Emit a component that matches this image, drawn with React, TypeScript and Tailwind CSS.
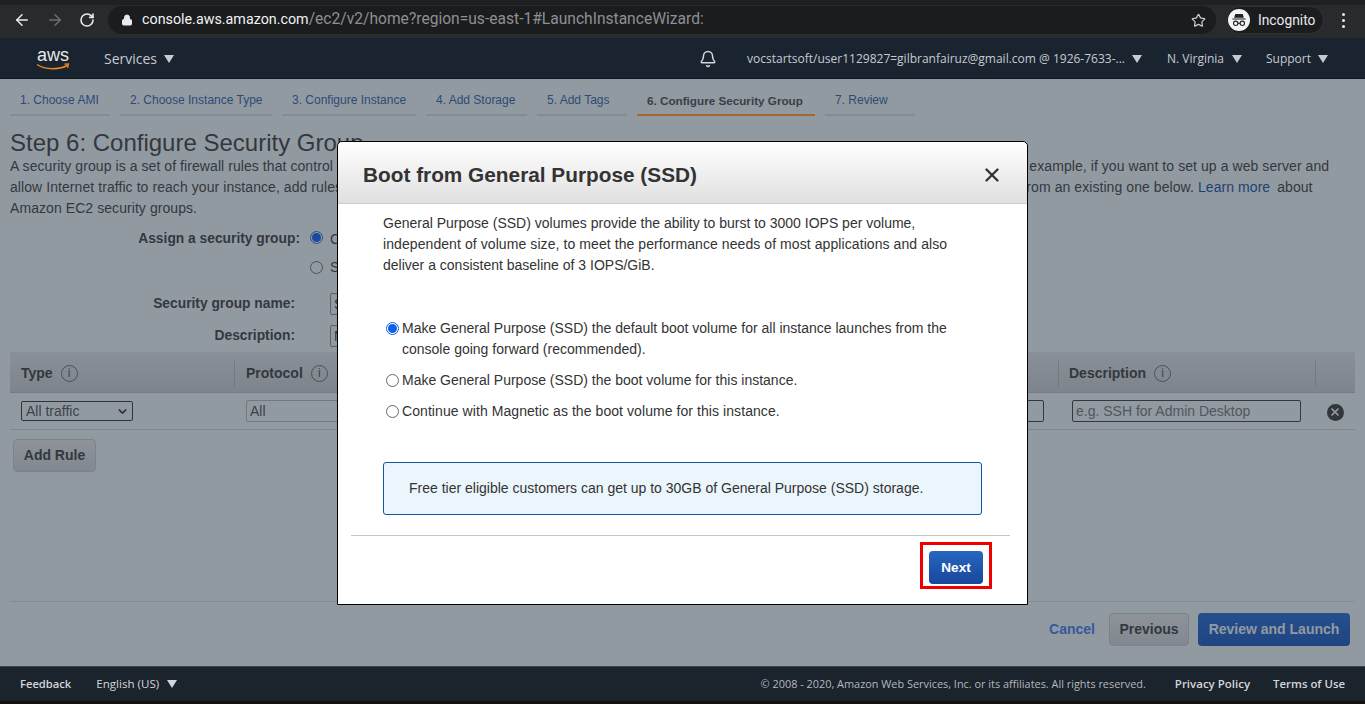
import { ArrowLeft, ArrowRight, RotateCw, Lock, Star, Bell, X, ChevronDown } from "lucide-react";

const tabs = [
  { label: "1. Choose AMI", w: "w-[100px]" },
  { label: "2. Choose Instance Type", w: "w-[152px]" },
  { label: "3. Configure Instance", w: "w-[134px]" },
  { label: "4. Add Storage", w: "w-[101px]" },
  { label: "5. Add Tags", w: "w-[90px]" },
];

function Caret({ className = "" }: { className?: string }) {
  return (
    <svg viewBox="0 0 10 8" className={`w-[10px] h-[8px] shrink-0 ${className}`} fill="currentColor">
      <path d="M0 0h10L5 8z" />
    </svg>
  );
}

function InfoIcon() {
  return (
    <span className="inline-flex items-center justify-center w-[17px] h-[17px] rounded-full border border-[#4b5159] text-[12px] font-normal leading-none text-[#3d4249]">
      i
    </span>
  );
}

function Radio({ checked, dim }: { checked?: boolean; dim?: boolean }) {
  if (checked) {
    return (
      <span
        className={`flex items-center justify-center w-[13px] h-[13px] rounded-full border ${
          dim ? "border-[#2a4d8f]" : "border-[#0f62e6]"
        } shrink-0`}
      >
        <span className={`w-[9px] h-[9px] rounded-full ${dim ? "bg-[#1c48a0]" : "bg-[#0f62e6]"}`} />
      </span>
    );
  }
  return (
    <span
      className={`block w-[13px] h-[13px] rounded-full border shrink-0 ${
        dim ? "border-[#4b5159]" : "border-[#666] bg-white"
      }`}
    />
  );
}

function IncognitoIcon() {
  return (
    <svg viewBox="0 0 20 20" className="w-[22px] h-[22px] shrink-0">
      <circle cx="10" cy="10" r="10" fill="#f1f3f4" />
      <path d="M6.6 4.6h6.8l1 3.4H5.6z M4 8.6h12v1H4z" fill="#202124" />
      <circle cx="7" cy="13" r="2" fill="none" stroke="#202124" strokeWidth="1" />
      <circle cx="13" cy="13" r="2" fill="none" stroke="#202124" strokeWidth="1" />
      <path d="M9 13h2" stroke="#202124" strokeWidth="1" />
    </svg>
  );
}

function BrowserBar() {
  return (
    <div className="h-[38px] shrink-0 bg-[#292a2d] border-t-[5px] border-[#1f2022] flex items-start pt-[1px] font-['Roboto',sans-serif]">
      <div className="w-[108px] h-[28px] pl-[13px] flex items-center gap-[15px] shrink-0">
        <ArrowLeft size={18} strokeWidth={2} className="text-[#e8eaed]" />
        <ArrowRight size={18} strokeWidth={2} className="text-[#6c6e71]" />
        <RotateCw size={16} strokeWidth={2.4} className="text-[#e8eaed]" />
      </div>
      <div className="w-[1108px] h-[28px] rounded-full bg-[#1b1c1e] flex items-center pl-[13px] pr-[9px] shrink-0">
        <Lock size={12} fill="#e8eaed" className="text-[#e8eaed] mr-[9px]" />
        <span className="text-[#f1f3f4] text-[14.3px]">console.aws.amazon.com</span>
        <span className="text-[#8d9094] text-[15.6px]">/ec2/v2/home?region=us-east-1#LaunchInstanceWizard:</span>
        <Star size={15} className="ml-auto mr-[1px] text-[#c8cacd]" />
      </div>
      <div className="ml-[10px] h-[28px] w-[98px] rounded-full bg-[#1b1c1e] flex items-center pl-[1px] gap-[8px] shrink-0 border border-[#303134]">
        <IncognitoIcon />
        <span className="text-[13.8px] text-[#e8eaed]">Incognito</span>
      </div>
      <div className="ml-[18px] h-[28px] flex flex-col justify-center gap-[3px] shrink-0">
        <span className="w-[3px] h-[3px] rounded-full bg-[#e8eaed]" />
        <span className="w-[3px] h-[3px] rounded-full bg-[#e8eaed]" />
        <span className="w-[3px] h-[3px] rounded-full bg-[#e8eaed]" />
      </div>
    </div>
  );
}

function AwsNav() {
  return (
    <div className="h-[41px] shrink-0 bg-[#1a2430] border-b border-[#11181f] flex items-center pt-[1px] font-['Open_Sans',sans-serif] text-[#c6cbd0]">
      <div className="ml-[36px] w-[34px] relative h-[28px] shrink-0">
        <span className="block text-center text-[18px] leading-[20px] text-[#e6e8ea] font-['Liberation_Sans',sans-serif]">
          aws
        </span>
        <svg viewBox="0 0 34 8" className="absolute left-0 top-[18px] w-[34px] h-[8px]" fill="none">
          <path d="M1 1.5C9 7 24 7 32 2" stroke="#e8891c" strokeWidth="1.5" />
          <path d="M28.5 1.2l4-.2-.8 4" stroke="#e8891c" strokeWidth="1.2" />
        </svg>
      </div>
      <span className="ml-[34px] text-[14px] font-medium">Services</span>
      <Caret className="ml-[7px]" />
      <Bell size={18} strokeWidth={2} className="ml-[525px] text-[#d4d7da]" />
      <span className="ml-[30px] text-[12px] font-medium whitespace-nowrap">
        vocstartsoft/user1129827=gilbranfairuz@gmail.com @ 1926-7633-...
      </span>
      <Caret className="ml-[7px]" />
      <span className="ml-[25px] text-[12px] font-medium">N. Virginia</span>
      <Caret className="ml-[8px]" />
      <span className="ml-[24px] text-[12px] font-medium">Support</span>
      <Caret className="ml-[7px]" />
    </div>
  );
}

function Tabs() {
  return (
    <div className="flex gap-[10px] pl-[10px] h-[37px] text-[12px] font-['Liberation_Sans',sans-serif]">
      {tabs.map((t) => (
        <div key={t.label} className={`${t.w} border-b-2 border-[#858b92] text-[#2c4a77] pl-[10px] pt-[12px]`}>
          {t.label}
        </div>
      ))}
      <div className="w-[178px] border-b-2 border-[#a2692f] text-[#3a3f45] font-bold pl-[10px] pt-[13px] text-[11.7px]">
        6. Configure Security Group
      </div>
      <div className="w-[90px] border-b-2 border-[#858b92] text-[#2c4a77] pt-[12px] pl-[10px]">7. Review</div>
    </div>
  );
}

function RuleTable() {
  return (
    <div className="mx-[10px] mt-[5px] text-[14px]">
      <div className="h-[41px] pt-[2px] flex items-center bg-gradient-to-b from-[#8a9097] to-[#7e848b] border-b border-[#767c83] font-bold text-[#33383e]">
        <div className="w-[224px] pl-[11px] flex items-center gap-[8px]">
          Type <InfoIcon />
        </div>
        <div className="w-[250px] h-[28px] border-l border-[#747a81] pl-[11px] flex items-center gap-[8px]">
          Protocol <InfoIcon />
        </div>
        <div className="w-[250px] h-[28px] border-l border-[#747a81] pl-[11px] flex items-center gap-[8px]">
          Port Range <InfoIcon />
        </div>
        <div className="w-[324px] h-[28px] border-l border-[#747a81] pl-[11px] flex items-center gap-[8px]">
          Source <InfoIcon />
        </div>
        <div className="w-[257px] h-[28px] border-l border-[#747a81] pl-[10px] flex items-center gap-[8px]">
          Description <InfoIcon />
        </div>
        <div className="flex-1 h-[28px] border-l border-[#747a81]" />
      </div>
      <div className="h-[37px] flex items-center border-b border-[#7f858c] text-[#3d4249]">
        <div className="w-[224px] pl-[11px]">
          <div className="w-[112px] h-[20px] border border-[#2f343a] rounded-[2px] flex items-center justify-between pl-[4px] pr-[3px]">
            All traffic
            <ChevronDown size={13} strokeWidth={3} className="text-[#2f343a]" />
          </div>
        </div>
        <div className="w-[250px] pl-[12px]">
          <div className="w-[220px] h-[22px] border border-[#74797f] rounded-[2px] flex items-center pl-[3px]">All</div>
        </div>
        <div className="w-[250px]" />
        <div className="w-[324px] pr-[14px] flex justify-end">
          <div className="w-[200px] h-[22px] border border-[#33383e] rounded-[2px]" />
        </div>
        <div className="w-[257px] pl-[14px]">
          <div className="w-[229px] h-[22px] border border-[#33383e] rounded-[2px] flex items-center pl-[3px] text-[#50565c]">
            e.g. SSH for Admin Desktop
          </div>
        </div>
        <div className="flex-1 flex justify-center pt-[2px]">
          <span className="w-[17px] h-[17px] rounded-full bg-[#33373d] flex items-center justify-center">
            <X size={12} strokeWidth={3.5} className="text-[#929aa1]" />
          </span>
        </div>
      </div>
      <button className="mt-[9px] ml-[3px] w-[83px] h-[33px] rounded-[4px] border border-[#7d838a] bg-gradient-to-b from-[#8d9399] to-[#82888f] font-bold text-[#33383e]">
        Add Rule
      </button>
    </div>
  );
}

function PageContent() {
  return (
    <div className="flex-1 min-h-0 bg-[#929aa1] flex flex-col font-['Liberation_Sans',sans-serif] text-[#33383e]">
      <Tabs />
      <div className="px-[10px] pt-[12px]">
        <h1 className="text-[24px] leading-[30px] text-[#33383e]">Step 6: Configure Security Group</h1>
        <p className="text-[14px] leading-[21px] mt-[-2px] w-[1325px] tracking-[0.07px]">
          A security group is a set of firewall rules that control the traffic for your instance. On this page, you can
          add rules to allow specific traffic to reach your instance. For example, if you want to set up a web server and
          allow Internet traffic to reach your instance, add rules that allow unrestricted access to the HTTP and HTTPS
          ports. You can create a new security group or select from an existing one below.{" "}
          <span className="text-[#1f3f74] mr-[3px]">Learn more</span> about Amazon EC2 security groups.
        </p>
      </div>
      <div className="text-[14px] mt-[9px]">
        <div className="flex items-center h-[22px]">
          <span className="w-[300px] text-right font-bold text-[13.8px]">Assign a security group:</span>
          <span className="ml-[10px] mb-[3px]">
            <Radio checked dim />
          </span>
          <span className="ml-[7px]">Create a new security group</span>
        </div>
        <div className="flex items-center h-[22px] mt-[6px]">
          <span className="w-[310px]" />
          <Radio dim />
          <span className="ml-[7px]">Select an existing security group</span>
        </div>
        <div className="flex items-center h-[22px] mt-[15px]">
          <span className="w-[295px] text-right font-bold text-[13.8px]">Security group name:</span>
          <div className="ml-[35px] w-[240px] h-[22px] border border-[#5c6268] rounded-[2px] pl-[3px] flex items-center">
            SecurityGroup
          </div>
        </div>
        <div className="flex items-center h-[22px] mt-[10px]">
          <span className="w-[295px] text-right font-bold text-[13.8px]">Description:</span>
          <div className="ml-[35px] w-[240px] h-[22px] border border-[#5c6268] rounded-[2px] pl-[3px] flex items-center">
            NewGroup
          </div>
        </div>
      </div>
      <RuleTable />
      <div className="mt-auto mx-[10px] border-t border-[#858b92] h-[65px] flex items-start justify-end pt-[11px] pr-[5px] text-[14px] font-bold">
        <span className="text-[#34599c] mr-[14px] mt-[6px]">Cancel</span>
        <button className="w-[80px] h-[33px] rounded-[4px] border border-[#7d838a] bg-gradient-to-b from-[#8d9399] to-[#82888f] text-[#33383e] mr-[9px]">
          Previous
        </button>
        <button className="w-[152px] h-[33px] rounded-[4px] bg-gradient-to-b from-[#264f8d] to-[#1f4582] text-[#929aa1]">
          Review and Launch
        </button>
      </div>
    </div>
  );
}

function Footer() {
  return (
    <div className="shrink-0">
      <div className="h-[35px] bg-[#1b232d] border-t border-[#3a424c] flex items-center text-[#d3d6d9] font-['Open_Sans',sans-serif]">
        <span className="ml-[20px] font-semibold text-[11.2px]">Feedback</span>
        <span className="ml-[25px] text-[11.6px]">English (US)</span>
        <Caret className="ml-[8px]" />
        <span className="ml-auto text-[10.9px] text-[#b3b8bd]">
          © 2008 - 2020, Amazon Web Services, Inc. or its affiliates. All rights reserved.
        </span>
        <span className="ml-[29px] font-semibold text-[11.5px]">Privacy Policy</span>
        <span className="ml-[23px] mr-[20px] font-semibold text-[11.4px]">Terms of Use</span>
      </div>
      <div className="h-[3px] bg-[#14100e]" />
    </div>
  );
}

function Modal() {
  return (
    <div className="absolute left-[337px] top-[141px] w-[691px] h-[464px] bg-white border border-black rounded-t-[5px] flex flex-col font-['Liberation_Sans',sans-serif] text-[#333]">
      <div className="h-[62px] shrink-0 rounded-t-[5px] bg-gradient-to-b from-white to-[#e0e0e0] border-b border-[#cccccc] flex items-center justify-between pl-[25px] pr-[24px]">
        <h2 className="text-[20.8px] font-bold text-[#333] relative top-[2px]">Boot from General Purpose (SSD)</h2>
        <X size={22} strokeWidth={2.6} className="text-[#333] relative top-[2px]" />
      </div>
      <div className="flex-1 text-[14px] leading-[21px]">
        <p className="ml-[45px] mt-[9px] w-[590px]">
          General Purpose (SSD) volumes provide the ability to burst to 3000 IOPS per volume,
          <br />
          <span className="tracking-[0.08px]">
            independent of volume size, to meet the performance needs of most applications and also
          </span>
          <br />
          deliver a consistent baseline of 3 IOPS/GiB.
        </p>
        <div className="ml-[48px] mt-[42px]">
          <div className="flex items-start gap-[3px]">
            <span className="mt-[4px]">
              <Radio checked />
            </span>
            <span className="w-[580px]">
              Make General Purpose (SSD) the default boot volume for all instance launches from the
              <br />
              console going forward (recommended).
            </span>
          </div>
          <div className="flex items-center gap-[3px] mt-[10px]">
            <Radio />
            <span>Make General Purpose (SSD) the boot volume for this instance.</span>
          </div>
          <div className="flex items-center gap-[3px] mt-[10px]">
            <Radio />
            <span className="tracking-[0.07px]">Continue with Magnetic as the boot volume for this instance.</span>
          </div>
        </div>
        <div className="ml-[45px] mt-[40px] w-[599px] h-[53px] bg-[#ebf5fc] border border-[#0f56a8] rounded-[3px] flex items-center pl-[25px]">
          Free tier eligible customers can get up to 30GB of General Purpose (SSD) storage.
        </div>
        <div className="ml-[13px] mt-[20px] w-[659px] border-t border-[#c8c8c8] flex justify-end">
          <div className="mt-[6px] mr-[18px] w-[72px] h-[47px] border-[3px] border-[#f00000] flex items-end justify-center pb-[2px]">
            <button className="w-[54px] h-[33px] rounded-[4px] bg-gradient-to-b from-[#2866c0] to-[#17479c] text-white font-bold text-[13.6px]">
              Next
            </button>
          </div>
        </div>
      </div>
    </div>
  );
}

export default function App() {
  return (
    <div className="relative w-[1365px] h-[704px] overflow-hidden flex flex-col">
      <BrowserBar />
      <AwsNav />
      <PageContent />
      <Footer />
      <Modal />
    </div>
  );
}
